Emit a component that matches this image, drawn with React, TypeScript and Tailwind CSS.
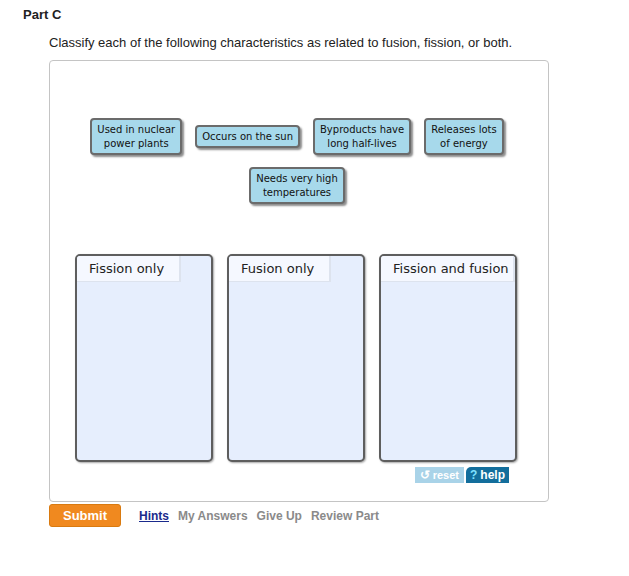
import React from 'react';

const tiles = [
  ['Used in nuclear', 'power plants'],
  ['Occurs on the sun'],
  ['Byproducts have', 'long half-lives'],
  ['Releases lots', 'of energy'],
];

const bins = [
  { label: 'Fission only', tab: 'w-[104px]' },
  { label: 'Fusion only', tab: 'w-[102px]' },
  { label: 'Fission and fusion', tab: 'w-full' },
];

const Tile: React.FC<{ lines: string[] }> = ({ lines }) => (
  <div className="rounded-[4px] border-2 border-[#6b6b6b] bg-[#a7d9eb] px-[5px] py-[2.5px] text-center text-[10px] leading-[14px] text-[#111] shadow-[2px_2px_2px_rgba(0,0,0,0.45)] [font-family:'DejaVu_Sans',Verdana,sans-serif]">
    {lines.map((l) => (
      <div key={l} className="whitespace-nowrap">{l}</div>
    ))}
  </div>
);

export default function App() {
  return (
    <div className="h-[576px] w-[629px] bg-white [font-family:'Liberation_Sans',Arial,sans-serif]">
      <div className="px-[23px] pt-[7px]">
        <h2 className="text-[13px] font-bold leading-[16px] text-[#222]">Part C</h2>
      </div>
      <div className="pl-[49px]">
        <p className="mt-[12px] text-[13px] leading-[15px] text-[#222]">
          Classify each of the following characteristics as related to fusion, fission, or both.
        </p>

        {/* drag and drop panel */}
        <div className="mt-[10px] flex h-[442px] w-[500px] flex-col rounded-[4px] border border-[#c4c4c4] pt-[57px]">
          <div className="flex items-center justify-center gap-[13px] pr-[4px]">
            {tiles.map((t) => (
              <Tile key={t[0]} lines={t} />
            ))}
          </div>
          <div className="mt-[12px] flex justify-center pr-[4px]">
            <Tile lines={['Needs very high', 'temperatures']} />
          </div>

          <div className="mt-[50px] flex justify-center gap-[14px] pr-[6px]">
            {bins.map((b) => (
              <div
                key={b.label}
                className="h-[208px] w-[138px] overflow-hidden rounded-[5px] border-2 border-[#5e5e5e] bg-[#e6eefd] shadow-[1px_1px_2px_rgba(0,0,0,0.35)]"
              >
                <div
                  className={`${b.tab} h-[26px] border-r-2 border-b border-[#dde3ee] bg-[#f5f8ff] pl-[12px] pt-[5px] text-[13px] leading-[16px] text-[#222] [font-family:'DejaVu_Sans',Verdana,sans-serif]`}
                >
                  {b.label}
                </div>
              </div>
            ))}
          </div>

          <div className="mt-[5px] flex justify-end gap-[2px] pr-[39px]">
            <div className="flex h-[16px] items-center gap-[3px] bg-[#a9d3e8] px-[5px] text-[11px] font-bold leading-none text-white">
              <span className="text-[12px]">↺</span>
              <span>reset</span>
            </div>
            <div className="flex h-[16px] items-center gap-[3px] rounded-tl-[5px] bg-[#136e9c] px-[4px] text-[12px] font-bold leading-none text-white">
              <span className="text-[#7fe0ff]">?</span>
              <span>help</span>
            </div>
          </div>
        </div>

        <div className="mt-[2px] flex items-center">
          <button className="h-[23px] w-[72px] rounded-[3px] border border-[#d97a10] bg-[#f0891f] text-[13px] font-bold text-white">
            Submit
          </button>
          <div className="ml-[18px] flex gap-[9px] text-[12px] font-bold text-[#8a8a8a]">
            <span className="text-[#1a2a8c] underline">Hints</span>
            <span>My Answers</span>
            <span>Give Up</span>
            <span>Review Part</span>
          </div>
        </div>
      </div>
    </div>
  );
}
